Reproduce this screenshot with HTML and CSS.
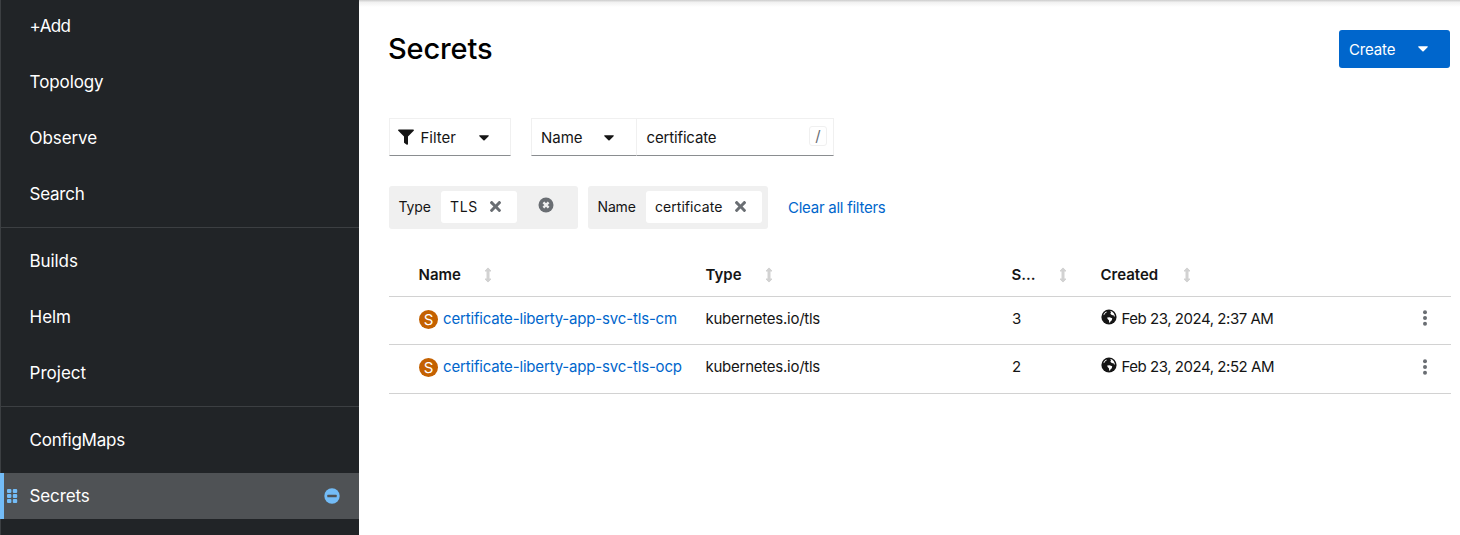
FILE: index.html
```
<!DOCTYPE html>
<html lang="en">
<head>
<meta charset="utf-8">
<title>Secrets</title>
<link rel="stylesheet" href="styles.css">
</head>
<body>
<svg class="defs" width="0" height="0" aria-hidden="true">
  <symbol id="caret" viewBox="0 0 10 6"><path d="M.9.3h8.2c.6 0 .9.6.5 1L5.6 5.3a.9.9 0 0 1-1.2 0L.4 1.3C0 .9.300.3.9.3z"/></symbol>
  <symbol id="times" viewBox="0 0 352 352"><path d="M243 176l100-100c12-12 12-32 0-44l-22-22c-12-12-32-12-44 0L176 110 76 9C64-3 44-3 32 9L9 32c-12 12-12 32 0 44l101 100L9 276c-12 12-12 32 0 44l23 23c12 12 32 12 44 0l100-100 101 100c12 12 32 12 44 0l22-23c12-12 12-32 0-44z"/></symbol>
  <symbol id="sort" viewBox="0 0 8 16"><path d="M4 .9 7 4H5v8h2L4 15.100 1 12h2V4H1z" stroke="currentColor" stroke-linejoin="round"/></symbol>
  <symbol id="globe" viewBox="0 0 16 16"><circle cx="8" cy="8" r="7.600"/><path fill="#fff" d="M3 4.600 4.600 2.900l1.300-.4-.6 1.300-1.300.8-.6 1.200-1 .4zM6.200 8.600l2.300-.4 2.700 1-.4 2.100-1.400 1.200-.4 1.300-.8-.3-.3-2.300-1.300-1.300zM9.300 2l1.700.4 1.800 1.900.9 2 .1 1.300-.8-.2-.7-1.300-1.200.1-1.800-1.400.7-1.100z"/></symbol>
  <symbol id="dots" viewBox="0 0 4 16"><circle cx="2" cy="2.200" r="2"/><circle cx="2" cy="8" r="2"/><circle cx="2" cy="13.800" r="2"/></symbol>
</svg>
<div class="app">
  <nav class="sidebar">
    <ul class="group">
      <li class="item"><span class="t-add">+Add</span></li>
      <li class="item"><span>Topology</span></li>
      <li class="item"><span>Observe</span></li>
      <li class="item"><span class="t-search">Search</span></li>
    </ul>
    <ul class="group">
      <li class="item"><span>Builds</span></li>
      <li class="item"><span>Helm</span></li>
      <li class="item"><span class="t-project">Project</span></li>
    </ul>
    <ul class="group">
      <li class="item"><span class="t-configmaps">ConfigMaps</span></li>
      <li class="item active">
        <svg class="grip" width="11" height="14" viewBox="0 0 11 14"><rect width="4.400" height="4" rx="1"/><rect x="5.800" width="4.400" height="4" rx="1"/><rect y="5" width="4.400" height="4" rx="1"/><rect x="5.800" y="5" width="4.400" height="4" rx="1"/><rect y="10" width="4.400" height="4" rx="1"/><rect x="5.800" y="10" width="4.400" height="4" rx="1"/></svg>
        <span>Secrets</span>
        <svg class="unpin" width="16" height="16" viewBox="0 0 16 16"><circle cx="8" cy="8" r="7.700" fill="#73bcf7"/><rect x="3.300" y="6.700" width="9.400" height="2.600" rx=".6" fill="#4f5255"/></svg>
      </li>
    </ul>
  </nav>
  <main class="main">
    <header class="head">
      <h1 class="title">Secrets</h1>
      <button class="create"><span class="t-create">Create</span><svg class="caret" width="10" height="6"><use href="#caret"/></svg></button>
    </header>
    <div class="toolbar">
      <div class="box filter">
        <svg width="16" height="16" viewBox="0 0 16 16"><path d="M.8.500h14.400c.7 0 1 .8.500 1.300L10 7.500v7.600c0 .6-.7 1-1.200.6L6.400 14a.8.8 0 0 1-.4-.6V7.500L.3 1.800C-.2 1.300.1.500.8.500z"/></svg>
        <span>Filter</span>
        <svg class="caret" width="10" height="6"><use href="#caret"/></svg>
      </div>
      <div class="search">
        <div class="box attr"><span>Name</span><svg class="caret" width="10" height="6"><use href="#caret"/></svg></div>
        <div class="box query"><span class="t-cert">certificate</span><kbd class="key">/</kbd></div>
      </div>
    </div>
    <div class="chips">
      <div class="chipgroup type">
        <span class="label">Type</span>
        <span class="chip"><span class="t-tls">TLS</span><svg class="x" width="11" height="11"><use href="#times"/></svg></span>
        <svg class="clear" width="16" height="16" viewBox="0 0 16 16"><circle cx="8" cy="8" r="7.500"/><path d="M5.400 5.400l5.200 5.200M10.600 5.400l-5.200 5.200" stroke="#f0f0f0" stroke-width="2.400"/></svg>
      </div>
      <div class="chipgroup name">
        <span class="label">Name</span>
        <span class="chip"><span class="t-ccert">certificate</span><svg class="x" width="11" height="11"><use href="#times"/></svg></span>
      </div>
      <a class="t-clear">Clear all filters</a>
    </div>
    <div class="table">
      <div class="row header">
        <div class="c1"><span>Name</span><svg class="sort" width="8" height="16"><use href="#sort"/></svg></div>
        <div class="c2"><span>Type</span><svg class="sort" width="8" height="16"><use href="#sort"/></svg></div>
        <div class="c3"><span>S...</span><svg class="sort" width="8" height="16"><use href="#sort"/></svg></div>
        <div class="c4"><span>Created</span><svg class="sort" width="8" height="16"><use href="#sort"/></svg></div>
        <div class="c5"></div>
      </div>
      <div class="row">
        <div class="c1"><span class="badge">S</span><a class="t-link">certificate-liberty-app-svc-tls-cm</a></div>
        <div class="c2"><span class="t-kube">kubernetes.io/tls</span></div>
        <div class="c3">3</div>
        <div class="c4"><svg class="globe" width="16" height="16"><use href="#globe"/></svg><span class="t-date">Feb 23, 2024, 2:37 AM</span></div>
        <div class="c5"><svg width="4" height="16"><use href="#dots"/></svg></div>
      </div>
      <div class="row last">
        <div class="c1"><span class="badge">S</span><a class="t-link">certificate-liberty-app-svc-tls-ocp</a></div>
        <div class="c2"><span class="t-kube">kubernetes.io/tls</span></div>
        <div class="c3">2</div>
        <div class="c4"><svg class="globe" width="16" height="16"><use href="#globe"/></svg><span class="t-date">Feb 23, 2024, 2:52 AM</span></div>
        <div class="c5"><svg width="4" height="16"><use href="#dots"/></svg></div>
      </div>
    </div>
  </main>
</div>
</body>
</html>
```
FILE: styles.css
```
* { box-sizing: border-box; }
body { margin: 0; background: #fff; color: #151515; font: 15px/20px Inter, "Open Sans", sans-serif; overflow: hidden; }
svg { display: block; flex: none; fill: currentColor; }
.defs { position: absolute; }
span, a { white-space: nowrap; }
a { color: #06c; }
.app { display: flex; height: 535px; }

.sidebar { width: 359px; flex: none; background: linear-gradient(90deg, #3c3f42 1px, #212427 1px); color: #fff; font-size: 17px; letter-spacing: -.1px; padding-top: 3px; overflow: hidden; }
.group { list-style: none; margin: 0; padding: 0; display: flex; flex-direction: column; gap: 10px; }
.group + .group { margin-top: 10px; border-top: 1px solid #3c3f42; padding-top: 10px; }
.item { height: 46px; display: flex; align-items: center; padding-left: 29.6px; }
.active { background: #4f5255; padding: 0 19.5px 0 3px; border-left: 4px solid #73bcf7; }
.grip { fill: #73bcf7; margin: 0 11.500px 0 0; }
.unpin { margin-left: auto; }
.t-add { letter-spacing: -.6px; }
.t-search, .t-configmaps { letter-spacing: -.25px; }
.t-project { letter-spacing: 0; }

.main { flex: 1; padding: 30px 9px 0 30px; background: linear-gradient(#cfcfcf, #d8d8d8 1px, #f0f0f0 2px, #fff 7px); }
.head { display: flex; justify-content: space-between; align-items: center; height: 38px; padding-right: 1px; }
.title { margin: 0 0 0 -1px; font-size: 29px; font-weight: 500; line-height: 38px; letter-spacing: -.15px; color: #000; }
.create { width: 111px; height: 38px; border: 0; border-radius: 3px; background: #06c; color: #fff; font: inherit; padding: 2px 22px 0 10px; display: flex; align-items: center; justify-content: space-between; }
.create .caret { margin-top: -2px; }
.t-create { letter-spacing: -.15px; }

.toolbar { display: flex; gap: 20px; margin-top: 50px; }
.box { height: 38px; display: flex; align-items: center; border: 1px solid #f0f0f0; border-bottom-color: #8a8d90; }
.box span { padding-top: 2px; }
.filter { width: 122px; padding: 0 21px 0 8px; }
.filter .caret, .attr .caret { margin-left: auto; margin-top: 1px; }
.filter span { margin-left: 6.500px; }
.search { display: flex; }
.attr { width: 105px; padding: 0 22px 0 9px; border-right: 0; }
.query { width: 198px; padding: 0 6px 0 9.500px; justify-content: space-between; }
.t-cert { letter-spacing: -.15px; }
.key { width: 18px; height: 20px; border: 1px solid #f0f0f0; border-radius: 3px; color: #6a6e73; font: 15px/18px Inter, sans-serif; text-align: center; margin-top: -3px; }

.chips { display: flex; margin-top: 30px; align-items: center; }
.chipgroup { height: 43px; background: #f0f0f0; border-radius: 3px; display: flex; align-items: center; padding: 0 0 1px 10px; font-size: 14px; }
.type { width: 189px; margin-right: 10px; }
.name { width: 180px; margin-right: 20px; }
.label { width: 42px; margin-left: -.5px; margin-right: .5px; letter-spacing: -.15px; }
.name .label { width: 48px; }
.chip { height: 32px; background: #fff; border-radius: 3px; display: flex; align-items: center; justify-content: space-between; padding: 0 16px 0 9px; width: 76px; }
.name .chip { width: 116px; }
.t-tls { letter-spacing: .6px; }
.t-ccert { letter-spacing: .05px; }
.x { fill: #6a6e73; margin-top: -1px; }
.clear { fill: #6a6e73; margin: -4px 0 0 20.500px; }
.t-clear { letter-spacing: -.25px; }

.table { margin-top: 24px; }
.row { display: grid; grid-template-columns: 317px 306px 89px 1fr 50px; height: 48px; border-bottom: 1px solid #d2d2d2; align-items: center; padding-bottom: 3px; }
.row > div { display: flex; align-items: center; }
.header { height: 44px; font-weight: 600; padding-bottom: 0; }
.last { height: 49px; padding-bottom: 4px; }
.row .c1 { padding-left: 30px; }
.sort { color: #d2d2d2; margin-left: 23px; }
.c4 .sort { margin-left: 24.500px; }
.header span { margin-left: -.5px; }
.badge { width: 19px; height: 19px; border-radius: 50%; background: #c46100; color: #fff; line-height: 19px; text-align: center; margin-right: 5px; }
.t-link { letter-spacing: -.17px; }
.t-kube { letter-spacing: -.25px; margin-left: -.5px; }
.t-date { letter-spacing: -.46px; }
.globe { margin: -4px 4.500px 0 0; }
.row .c5 { color: #6a6e73; padding: 0 0 2px 22px; }
.last .c5 svg { margin-top: 2px; }
```
